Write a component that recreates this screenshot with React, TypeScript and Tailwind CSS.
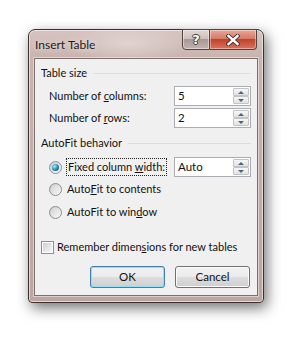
import React from 'react';

const font = { fontFamily: 'Lato, "Noto Sans", Arial, sans-serif' };

const Arrow = ({ up }: { up?: boolean }) => (
  <span
    className={
      up
        ? 'h-0 w-0 border-x-[3px] border-b-[3px] border-x-transparent border-b-[#4c6384]'
        : 'h-0 w-0 border-x-[3px] border-t-[3px] border-x-transparent border-t-[#4c6384]'
    }
  />
);

const SpinBox = ({ value }: { value: string }) => (
  <div className="flex h-[20px] w-[77px] border border-[#abadb3] bg-white">
    <div className="flex-1 pl-[3px] text-[11.5px] leading-[18px] text-[#111]">{value}</div>
    <div className="flex w-[17px] flex-col py-px pr-px">
      <div className="flex flex-1 items-center justify-center rounded-[1px] border border-[#c3c3c3] bg-[linear-gradient(#f7f7f7,#e2e2e2)]">
        <Arrow up />
      </div>
      <div className="flex flex-1 items-center justify-center rounded-[1px] border border-[#c3c3c3] bg-[linear-gradient(#f7f7f7,#e2e2e2)]">
        <Arrow />
      </div>
    </div>
  </div>
);

const Radio = ({ checked }: { checked?: boolean }) => (
  <span className="flex h-[13px] w-[13px] shrink-0 items-center justify-center rounded-full border border-[#8e8f8f] bg-[linear-gradient(135deg,#c8c8c8,#fcfcfc)]">
    {checked ? (
      <span className="h-[7px] w-[7px] rounded-full bg-[radial-gradient(circle_at_35%_35%,#a6ecfb,#1f82b3_55%,#0d4b74)]" />
    ) : (
      <span className="h-[9px] w-[9px] rounded-full bg-[linear-gradient(135deg,#d4d4d4,#f6f6f6)]" />
    )}
  </span>
);

const GroupHeader = ({ title, className }: { title: string; className: string }) => (
  <div className={`flex h-[14px] items-center ${className}`}>
    <span className="whitespace-nowrap leading-[14px]">{title}</span>
    <span className="ml-[6px] h-px flex-1 bg-[#d5dfe5]" />
  </div>
);

export default function App() {
  return (
    <div className="h-[343px] w-[299px] bg-white pl-[28px] pt-[29px] text-[11px] text-[#111]" style={font}>
      <div className="flex h-[274px] w-[236px] flex-col rounded-t-[7px] rounded-b-[4px] border border-[#3b3230] bg-[linear-gradient(180deg,#d6c4c0_0px,#c9b3ae_28px,#bda6a1_100%)] shadow-[inset_0_0_0_1px_rgba(255,255,255,0.55),3px_5px_14px_rgba(0,0,0,0.55)]">
        <div className="flex h-[28px] items-start rounded-t-[7px] bg-[radial-gradient(ellipse_60px_20px_at_100px_14px,rgba(255,255,255,0.35),transparent)]">
          <span className="mt-[7px] whitespace-nowrap pl-[6px] text-[12px] leading-[16px] text-[#1c1c1c] [text-shadow:0_0_6px_rgba(255,255,255,0.9)]">
            Insert Table
          </span>
          <div className="ml-auto mr-[6px] -mt-px flex h-[21px]">
            <div className="flex w-[28px] items-center justify-center rounded-bl-[4px] border border-[#51443f] bg-[linear-gradient(#e3d7d4,#cdbfbc_45%,#a99895_50%,#c2b4b1)] shadow-[inset_0_0_0_1px_rgba(255,255,255,0.45)]">
              <span className="text-[13px] font-bold leading-none text-white [text-shadow:0_0_1px_#333,1px_0_0_#444,-1px_0_0_#444,0_1px_0_#444,0_-1px_0_#444]" style={{ fontFamily: '"DejaVu Sans", sans-serif' }}>
                ?
              </span>
            </div>
            <div className="flex w-[47px] items-center justify-center rounded-br-[4px] border border-l-0 border-[#51443f] bg-[linear-gradient(#e9a898,#d77a68_45%,#c2432b_50%,#d8735c)] shadow-[inset_0_0_0_1px_rgba(255,255,255,0.4)]">
              <svg width="14" height="12" viewBox="0 0 14 12">
                <path d="M2.5 2 L11.5 10 M11.5 2 L2.5 10" stroke="#3d2a26" strokeWidth="4.2" strokeLinecap="square" />
                <path d="M2.5 2 L11.5 10 M11.5 2 L2.5 10" stroke="#ffffff" strokeWidth="2.4" strokeLinecap="square" />
              </svg>
            </div>
          </div>
        </div>

        <div className="mx-[5px] mb-[6px] flex flex-1 flex-col whitespace-nowrap border border-[#7d6f6b] bg-[#f0f0f0] px-[6px] shadow-[0_0_0_1px_rgba(255,255,255,0.45)]">
          <GroupHeader title="Table size" className="mt-[7px]" />
          <div className="mt-[6px] flex h-[20px] items-center">
            <span className="pl-[8px]">
              Number of <span className="underline">c</span>olumns:
            </span>
            <div className="ml-auto">
              <SpinBox value="5" />
            </div>
          </div>
          <div className="mt-[2px] flex h-[20px] items-center">
            <span className="pl-[8px]">
              Number of <span className="underline">r</span>ows:
            </span>
            <div className="ml-auto">
              <SpinBox value="2" />
            </div>
          </div>

          <GroupHeader title="AutoFit behavior" className="mt-[8px]" />
          <div className="mt-[7px] flex h-[20px] items-center pl-[8px]">
            <Radio checked />
            <span className="ml-[4px] border border-dotted border-[#222] px-px leading-[16px]">
              Fixed column <span className="underline">w</span>idth:
            </span>
            <div className="ml-auto">
              <SpinBox value="Auto" />
            </div>
          </div>
          <div className="mt-[2px] flex h-[20px] items-center pl-[8px]">
            <Radio />
            <span className="ml-[5px]">
              Auto<span className="underline">F</span>it to contents
            </span>
          </div>
          <div className="mt-[3px] flex h-[20px] items-center pl-[8px]">
            <Radio />
            <span className="ml-[5px]">
              AutoFit to win<span className="underline">d</span>ow
            </span>
          </div>

          <div className="mt-[18px] flex h-[14px] items-center">
            <span className="flex h-[13px] w-[13px] items-center justify-center border border-[#8e8f8f] bg-white">
              <span className="h-[9px] w-[9px] bg-[linear-gradient(135deg,#cbcfd5,#f7f7f7)]" />
            </span>
            <span className="ml-[3px]">
              Remember dimen<span className="underline">s</span>ions for new tables
            </span>
          </div>

          <div className="mt-[12px] flex justify-end gap-[10px] pr-px">
            <button className="h-[22px] w-[75px] rounded-[3px] border border-[#3c7fb1] bg-[linear-gradient(#f2f2f2,#ebebeb_50%,#dddddd_50%,#cfcfcf)] text-[11.5px] leading-[18px] text-[#111] shadow-[inset_0_0_0_1px_#8ee0fb]">
              OK
            </button>
            <button className="h-[22px] w-[75px] rounded-[3px] border border-[#707070] bg-[linear-gradient(#f2f2f2,#ebebeb_50%,#dddddd_50%,#cfcfcf)] text-[11.5px] leading-[18px] text-[#111] shadow-[inset_0_0_0_1px_#fcfcfc]">
              Cancel
            </button>
          </div>
        </div>
      </div>
    </div>
  );
}
